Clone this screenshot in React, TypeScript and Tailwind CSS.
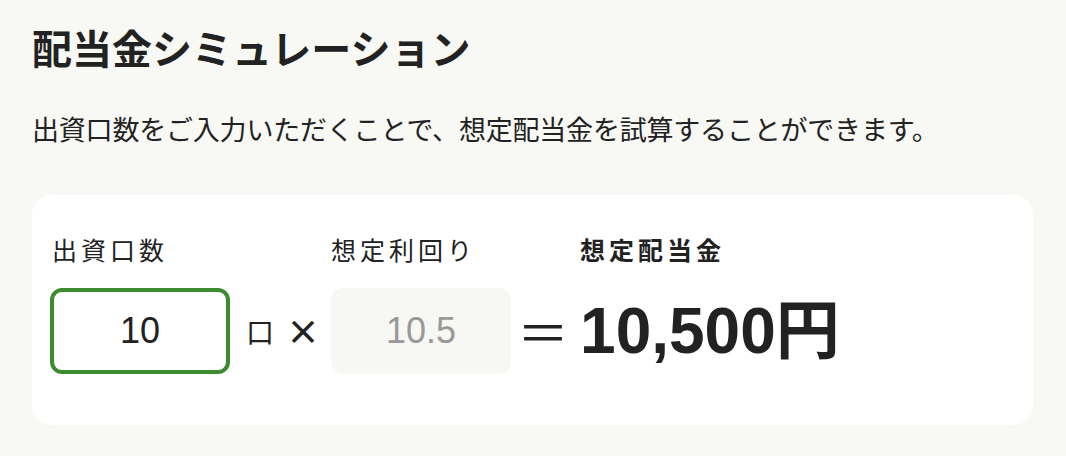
import { useState } from 'react';

const jp = "font-['Noto_Sans_CJK_JP',sans-serif]";
const num = "font-['Liberation_Sans','Noto_Sans_CJK_JP',sans-serif]";

export default function App() {
  const [units, setUnits] = useState('10');
  const rate = 10.5;
  const count = parseInt(units, 10) || 0;
  const dividend = Math.round(count * rate * 100);

  return (
    <div className={`min-h-[456px] w-full bg-[#f8f8f4] px-8 pt-[27px] text-[#222] ${jp}`}>
      <h1 className="text-[40px] leading-[40px] font-bold">配当金シミュレーション</h1>
      <p className="mt-[48px] text-[27px] leading-[27px] tracking-[-0.2px]">
        出資口数をご入力いただくことで、想定配当金を試算することができます。
      </p>

      <div className="mt-[53px] w-[1001px] rounded-[20px] bg-white pt-[42px] pb-[51px] pl-[18px]">
        <div className="grid w-fit grid-cols-[180px_auto_auto_180px_auto_auto] items-center">
          <div className="text-[25px] leading-[25px] tracking-[4px] pl-[2px]">出資口数</div>
          <div />
          <div />
          <div className="text-[25px] leading-[25px] tracking-[4px]">想定利回り</div>
          <div />
          <div className="text-[25px] leading-[25px] tracking-[4px] font-bold">想定配当金</div>

          <input
            value={units}
            onChange={(e) => setUnits(e.target.value)}
            className={`mt-[26px] h-[86px] w-[180px] rounded-[12px] border-4 border-[#3d8a2f] bg-white text-center text-[36px] text-[#222] outline-none ${num}`}
          />
          <span className="mt-[26px] ml-4 text-[28px] leading-none">口</span>
          <span className="mt-[26px] ml-[12px] mr-[11px] text-[34px] leading-none font-bold">×</span>
          <input
            readOnly
            value={rate}
            className={`mt-[26px] h-[86px] w-[180px] rounded-[12px] bg-[#f7f7f3] text-center text-[36px] text-[#999] outline-none ${num}`}
          />
          <span className="mt-[26px] ml-[6px] mr-[11px] text-[52px] leading-none">＝</span>
          <span className={`mt-[26px] text-[64px] leading-none font-bold ${num}`}>
            {dividend.toLocaleString('ja-JP')}円
          </span>
        </div>
      </div>
    </div>
  );
}
